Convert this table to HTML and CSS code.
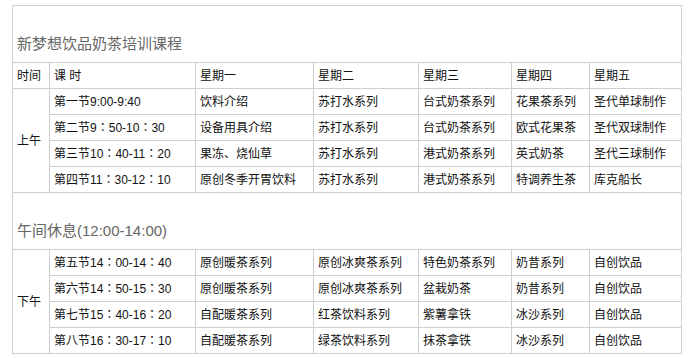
FILE: index.html
```html
<!DOCTYPE html>
<html lang="zh">
<head>
<meta charset="utf-8">
<title>新梦想饮品奶茶培训课程</title>
<link rel="stylesheet" href="styles.css">
</head>
<body>
<table class="schedule">
  <colgroup>
    <col class="c-time">
    <col class="c-slot">
    <col class="c-d1">
    <col class="c-d2">
    <col class="c-d3">
    <col class="c-d4">
    <col class="c-d5">
  </colgroup>
  <tbody>
    <tr class="caption-row"><td colspan="7">新梦想饮品奶茶培训课程</td></tr>
    <tr><td>时间</td><td>课 时</td><td>星期一</td><td>星期二</td><td>星期三</td><td>星期四</td><td>星期五</td></tr>
    <tr><td rowspan="4">上午</td><td>第一节9:00-9:40</td><td>饮料介绍</td><td>苏打水系列</td><td>台式奶茶系列</td><td>花果茶系列</td><td>圣代单球制作</td></tr>
    <tr><td>第二节9<span class="colon">：</span>50-10<span class="colon">：</span>30</td><td>设备用具介绍</td><td>苏打水系列</td><td>台式奶茶系列</td><td>欧式花果茶</td><td>圣代双球制作</td></tr>
    <tr><td>第三节10<span class="colon">：</span>40-11<span class="colon">：</span>20</td><td>果冻、烧仙草</td><td>苏打水系列</td><td>港式奶茶系列</td><td>英式奶茶</td><td>圣代三球制作</td></tr>
    <tr><td>第四节11<span class="colon">：</span>30-12<span class="colon">：</span>10</td><td>原创冬季开胃饮料</td><td>苏打水系列</td><td>港式奶茶系列</td><td>特调养生茶</td><td>库克船长</td></tr>
    <tr class="caption-row"><td colspan="7">午间休息(12:00-14:00)</td></tr>
    <tr><td rowspan="4">下午</td><td>第五节14<span class="colon">：</span>00-14<span class="colon">：</span>40</td><td>原创暖茶系列</td><td>原创冰爽茶系列</td><td>特色奶茶系列</td><td>奶昔系列</td><td>自创饮品</td></tr>
    <tr><td>第六节14<span class="colon">：</span>50-15<span class="colon">：</span>30</td><td>原创暖茶系列</td><td>原创冰爽茶系列</td><td>盆栽奶茶</td><td>奶昔系列</td><td>自创饮品</td></tr>
    <tr><td>第七节15<span class="colon">：</span>40-16<span class="colon">：</span>20</td><td>自配暖茶系列</td><td>红茶饮料系列</td><td>紫薯拿铁</td><td>冰沙系列</td><td>自创饮品</td></tr>
    <tr><td>第八节16<span class="colon">：</span>30-17<span class="colon">：</span>10</td><td>自配暖茶系列</td><td>绿茶饮料系列</td><td>抹茶拿铁</td><td>冰沙系列</td><td>自创饮品</td></tr>
  </tbody>
</table>
</body>
</html>
```

FILE: styles.css
```css
html, body {
  margin: 0;
  padding: 0;
  background: #fff;
}

body {
  padding: 5px 0 0 12px;
  font-family: "Liberation Sans", "Noto Sans CJK SC", sans-serif;
  color: #111;
}

.schedule {
  border-collapse: collapse;
  table-layout: fixed;
  width: 670px;
  font-size: 12px;
  line-height: 16px;
}

.c-time { width: 37px; }
.c-slot { width: 146px; }
.c-d1 { width: 118px; }
.c-d2 { width: 105px; }
.c-d3 { width: 93px; }
.c-d4 { width: 78px; }
.c-d5 { width: 92px; }

.schedule td {
  border: 1px solid #cfcfcf;
  height: 25px;
  padding: 0 4px;
  white-space: nowrap;
  overflow: hidden;
  vertical-align: middle;
}

.schedule .caption-row td {
  height: 48px;
  vertical-align: bottom;
  padding: 0 4px 8px;
  font-size: 15px;
  line-height: 20px;
  color: #666;
}

.colon {
  font-family: "Noto Sans CJK JP", "Noto Sans CJK TC", sans-serif;
  font-feature-settings: "locl" 0;
}
```
